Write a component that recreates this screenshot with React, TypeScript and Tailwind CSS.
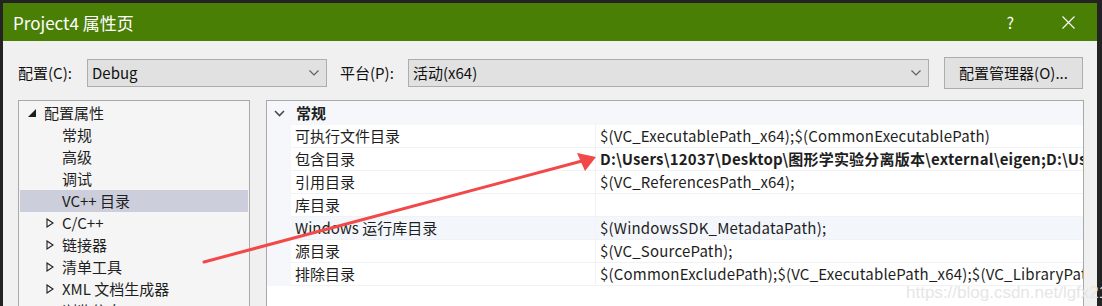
const ui = '"Noto Sans CJK SC", "Noto Sans", sans-serif'

const Chevron = ({ className = "" }: { className?: string }) => (
    <svg width="10" height="6" viewBox="0 0 10 6" className={className}>
        <path d="M0.5 0.5 L5 5 L9.5 0.5" fill="none" stroke="#606060" strokeWidth="1.2" />
    </svg>
)

const Dropdown = ({ value, width }: { value: string; width: string }) => (
    <div className={`${width} h-[28px] flex items-center justify-between border border-[#adadad] bg-[#e1e1e1] pl-[4px] pr-[7px]`}>
        <span className="text-[15px] text-[#111]">{value}</span>
        <Chevron />
    </div>
)

const treeItems = [
    { label: "常规", kind: "leaf" },
    { label: "高级", kind: "leaf" },
    { label: "调试", kind: "leaf" },
    { label: "VC++ 目录", kind: "leaf", selected: true },
    { label: "C/C++", kind: "closed" },
    { label: "链接器", kind: "closed" },
    { label: "清单工具", kind: "closed" },
    { label: "XML 文档生成器", kind: "closed" },
    { label: "浏览信息", kind: "closed" },
]

const rows = [
    { name: "可执行文件目录", value: "$(VC_ExecutablePath_x64);$(CommonExecutablePath)" },
    { name: "包含目录", value: "D:\\Users\\12037\\Desktop\\图形学实验分离版本\\external\\eigen;D:\\Users\\12037\\Desktop", bold: true },
    { name: "引用目录", value: "$(VC_ReferencesPath_x64);" },
    { name: "库目录", value: "" },
    { name: "Windows 运行库目录", value: "$(WindowsSDK_MetadataPath);", hover: true },
    { name: "源目录", value: "$(VC_SourcePath);" },
    { name: "排除目录", value: "$(CommonExcludePath);$(VC_ExecutablePath_x64);$(VC_LibraryPath_x64);" },
]

const App = () => {
    return (
        <div className="relative w-[1102px] h-[306px] overflow-hidden bg-[#232323] pt-[3px] pl-[3px] pr-[5px]" style={{ fontFamily: ui }}>
            <div className="flex flex-col h-full bg-[#f0f0f0]">
                {/* title bar */}
                <div className="h-[38px] shrink-0 bg-[#4a7f05] flex items-center pl-[10px] pr-[22px] text-white">
                    <span className="text-[17px] leading-none">Project4 属性页</span>
                    <span className="ml-auto text-[16px] leading-none">?</span>
                    <svg width="13" height="13" viewBox="0 0 13 13" className="ml-[48px]">
                        <path d="M0.5 0.5 L12.5 12.5 M12.5 0.5 L0.5 12.5" stroke="#fff" strokeWidth="1.1" />
                    </svg>
                </div>

                {/* config row */}
                <div className="flex items-center h-[32px] mt-[16px] pl-[15px] text-[15px] text-[#111]">
                    <span className="w-[69px]">配置(C):</span>
                    <Dropdown value="Debug" width="w-[240px]" />
                    <span className="w-[68px] ml-[13px]">平台(P):</span>
                    <Dropdown value="活动(x64)" width="w-[521px]" />
                    <div className="ml-[15px] w-[139px] h-[32px] flex items-center justify-center border border-[#adadad] bg-[#e1e1e1]">
                        配置管理器(O)...
                    </div>
                </div>

                {/* panels */}
                <div className="flex mt-[11px] pl-[15px] gap-[16px] flex-1 min-h-0">
                    {/* tree */}
                    <div className="w-[232px] border border-[#a9a9a9] border-b-0 bg-[#f5f5f5] pt-[1px] px-[1px] text-[15px] text-[#1e1e1e]">
                        <div className="h-[22px] flex items-center">
                            <svg width="8" height="8" viewBox="0 0 8 8" className="ml-[8px] mr-[8px]">
                                <polygon points="8,0 8,8 0,8" fill="#1e1e1e" />
                            </svg>
                            <span>配置属性</span>
                        </div>
                        {treeItems.map((t) => (
                            <div key={t.label} className={`h-[22px] flex items-center ${t.selected ? "bg-[#cccedb]" : ""}`}>
                                <span className="w-[42px] flex justify-end pr-[8px]">
                                    {t.kind === "closed" && (
                                        <svg width="8" height="10" viewBox="0 0 8 10">
                                            <polygon points="1,1 7,5 1,9" fill="none" stroke="#1e1e1e" strokeWidth="1.1" />
                                        </svg>
                                    )}
                                </span>
                                <span>{t.label}</span>
                            </div>
                        ))}
                    </div>

                    {/* property grid */}
                    <div className="w-[818px] border border-[#a9a9a9] border-b-0 bg-white text-[15px] text-[#1e1e1e] overflow-hidden">
                        <div className="h-[24px] flex items-center bg-[#f5f7fa]">
                            <span className="w-[25px] flex justify-center">
                                <svg width="11" height="7" viewBox="0 0 11 7">
                                    <path d="M1 1 L5.5 5.5 L10 1" fill="none" stroke="#4a4a4a" strokeWidth="1.6" />
                                </svg>
                            </span>
                            <span className="font-bold pl-[4px]">常规</span>
                        </div>
                        {rows.map((r) => (
                            <div key={r.name} className="h-[23px] flex bg-[#f5f7fa]">
                                <div className={`w-[304px] shrink-0 flex items-center pl-[4px] border-b border-[#f0f2f5] ml-[24px] ${r.hover ? "bg-[#f3f6fb]" : "bg-white"}`}>
                                    {r.name}
                                </div>
                                <div className={`flex-1 min-w-0 flex items-center pl-[4px] border-b border-l border-[#f0f2f5] whitespace-nowrap overflow-hidden tracking-[0.2px] ${r.hover ? "bg-[#f3f6fb]" : "bg-white"} ${r.bold ? "font-bold" : ""}`}>
                                    {r.value}
                                </div>
                            </div>
                        ))}
                    </div>
                </div>
            </div>

            {/* annotation arrow drawn over the screenshot */}
            <svg width="1102" height="306" className="absolute left-0 top-0 pointer-events-none">
                <line x1="204" y1="262" x2="582" y2="161" stroke="#f24848" strokeWidth="3" strokeLinecap="round" />
                <polygon points="596,157 577,153 585,171" fill="#f24848" />
            </svg>

            <span className="absolute left-[906px] top-[280px] text-[17px] text-[#e6e6e6] pointer-events-none" style={{ fontFamily: '"Liberation Sans", Arial, sans-serif' }}>
                https://blog.csdn.net/lgfx21
            </span>
        </div>
    )
}

export default App
